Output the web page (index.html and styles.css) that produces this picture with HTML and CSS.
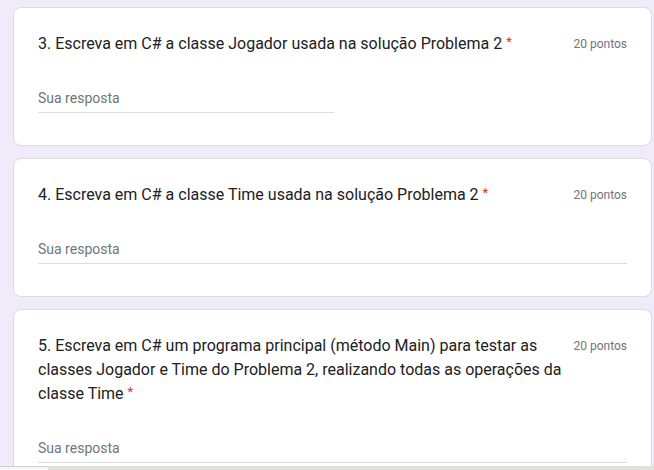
FILE: index.html
```html
<!DOCTYPE html>
<html lang="pt-BR">
<head>
<meta charset="utf-8">
<title>Formulário</title>
<link rel="stylesheet" href="styles.css">
</head>
<body>
<main class="form">
  <section class="card">
    <div class="head">
      <div class="title">3. Escreva em C# a classe Jogador usada na solução Problema 2 <span class="req">*</span></div>
      <div class="points">20 pontos</div>
    </div>
    <div class="answer short">Sua resposta</div>
  </section>
  <section class="card">
    <div class="head">
      <div class="title">4. Escreva em C# a classe Time usada na solução Problema 2 <span class="req">*</span></div>
      <div class="points">20 pontos</div>
    </div>
    <div class="answer">Sua resposta</div>
  </section>
  <section class="card">
    <div class="head">
      <div class="title">5. Escreva em C# um programa principal (método Main) para testar as classes Jogador e Time do Problema 2, realizando todas as operações da classe Time <span class="req">*</span></div>
      <div class="points">20 pontos</div>
    </div>
    <div class="answer">Sua resposta</div>
  </section>
</main>
<div class="strip"><div class="strip-left"></div><div class="strip-right"></div></div>
</body>
</html>
```

FILE: styles.css
```css
html, body {
  margin: 0;
  padding: 0;
  background: #efebf8;
  font-family: Roboto, "Noto Sans", Arial, sans-serif;
  overflow: hidden;
}
.form {
  display: flex;
  flex-direction: column;
  gap: 12px;
  margin: 7px 2px 0 13px;
}
.card {
  background: #fff;
  border: 1px solid #dadce0;
  border-radius: 8px;
  padding: 24px 24px 32px 24px;
}
.head {
  display: flex;
  justify-content: space-between;
  align-items: flex-start;
  gap: 4px;
}
.title {
  flex: 1 1 auto;
  min-width: 0;
  max-width: 533px;
  font-size: 16px;
  line-height: 24px;
  color: #202124;
}
.req {
  color: #d93025;
  font-size: 13px;
  vertical-align: top;
  line-height: 20px;
}
.points {
  flex: none;
  font-size: 12px;
  line-height: 24px;
  color: #70757a;
  white-space: nowrap;
}
.answer {
  margin-top: 32px;
  font-size: 14px;
  line-height: 20px;
  color: #70757a;
  padding-bottom: 4px;
  border-bottom: 1px solid #dadce0;
}
.answer.short {
  width: 296px;
}
.strip {
  position: fixed;
  left: 0;
  right: 0;
  bottom: 0;
  height: 4px;
  display: flex;
}
.strip-left {
  width: 48px;
  background: #f7f7f7;
  border-top: 1px solid #cfcfcf;
}
.strip-right {
  flex: 1;
  background: #e2e0db;
}
```
